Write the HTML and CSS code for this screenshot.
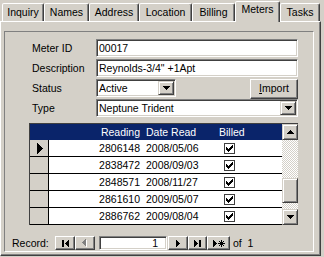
FILE: index.html
```html
<!DOCTYPE html>
<html>
<head>
<meta charset="utf-8">
<link rel="stylesheet" href="styles.css">
</head>
<body>
<div class="tabs">
  <div class="tab t-inq">Inquiry</div>
  <div class="tab t-nam">Names</div>
  <div class="tab t-adr">Address</div>
  <div class="tab t-loc">Location</div>
  <div class="tab t-bil">Billing</div>
  <div class="tab t-met sel">Meters</div>
  <div class="tab t-tsk">Tasks</div>
</div>
<div class="page">
  <div class="frame">
    <div class="form">
      <span class="lbl">Meter ID</span>
      <div class="tb">00017</div>
      <span class="lbl">Description</span>
      <div class="tb">Reynolds-3/4" +1Apt</div>
      <span class="lbl">Status</span>
      <div class="status-row">
        <div class="tb combo short"><span class="cv">Active</span><span class="drop"><svg width="7" height="4" shape-rendering="crispEdges"><path d="M0 0h7v1h-1v1h-1v1h-1v1h-1v-1h-1v-1h-1v-1h-1z"/></svg></span></div>
        <div class="btn import"><u>I</u>mport</div>
      </div>
      <span class="lbl">Type</span>
      <div class="tb combo"><span class="cv">Neptune Trident</span><span class="drop"><svg width="7" height="4" shape-rendering="crispEdges"><path d="M0 0h7v1h-1v1h-1v1h-1v1h-1v-1h-1v-1h-1v-1h-1z"/></svg></span></div>
    </div>

    <div class="sheet">
      <div class="grid">
        <div class="row hdr">
          <div class="sel-cell"></div>
          <div class="c-read">Reading</div>
          <div class="c-date">Date Read</div>
          <div class="c-bill">Billed</div>
        </div>
        <div class="row">
          <div class="sel-cell"><svg width="6" height="11" shape-rendering="crispEdges"><path d="M0 0h1v1h1v1h1v1h1v1h1v1h1v1h-1v1h-1v1h-1v1h-1v1h-1v1h-1z"/></svg></div>
          <div class="c-read">2806148</div>
          <div class="c-date">2008/05/06</div>
          <div class="c-bill"><svg class="chk" width="11" height="11" shape-rendering="crispEdges"><rect x="0.5" y="0.5" width="10" height="10" fill="#fff" stroke="#404040"/><path d="M2 4h1v3h-1zM3 5h1v3h-1zM4 6h1v3h-1zM5 5h1v3h-1zM6 4h1v3h-1zM7 3h1v3h-1zM8 2h1v3h-1z"/></svg></div>
        </div>
        <div class="row">
          <div class="sel-cell"></div>
          <div class="c-read">2838472</div>
          <div class="c-date">2008/09/03</div>
          <div class="c-bill"><svg class="chk" width="11" height="11" shape-rendering="crispEdges"><rect x="0.5" y="0.5" width="10" height="10" fill="#fff" stroke="#404040"/><path d="M2 4h1v3h-1zM3 5h1v3h-1zM4 6h1v3h-1zM5 5h1v3h-1zM6 4h1v3h-1zM7 3h1v3h-1zM8 2h1v3h-1z"/></svg></div>
        </div>
        <div class="row">
          <div class="sel-cell"></div>
          <div class="c-read">2848571</div>
          <div class="c-date">2008/11/27</div>
          <div class="c-bill"><svg class="chk" width="11" height="11" shape-rendering="crispEdges"><rect x="0.5" y="0.5" width="10" height="10" fill="#fff" stroke="#404040"/><path d="M2 4h1v3h-1zM3 5h1v3h-1zM4 6h1v3h-1zM5 5h1v3h-1zM6 4h1v3h-1zM7 3h1v3h-1zM8 2h1v3h-1z"/></svg></div>
        </div>
        <div class="row">
          <div class="sel-cell"></div>
          <div class="c-read">2861610</div>
          <div class="c-date">2009/05/07</div>
          <div class="c-bill"><svg class="chk" width="11" height="11" shape-rendering="crispEdges"><rect x="0.5" y="0.5" width="10" height="10" fill="#fff" stroke="#404040"/><path d="M2 4h1v3h-1zM3 5h1v3h-1zM4 6h1v3h-1zM5 5h1v3h-1zM6 4h1v3h-1zM7 3h1v3h-1zM8 2h1v3h-1z"/></svg></div>
        </div>
        <div class="row">
          <div class="sel-cell"></div>
          <div class="c-read">2886762</div>
          <div class="c-date">2009/08/04</div>
          <div class="c-bill"><svg class="chk" width="11" height="11" shape-rendering="crispEdges"><rect x="0.5" y="0.5" width="10" height="10" fill="#fff" stroke="#404040"/><path d="M2 4h1v3h-1zM3 5h1v3h-1zM4 6h1v3h-1zM5 5h1v3h-1zM6 4h1v3h-1zM7 3h1v3h-1zM8 2h1v3h-1z"/></svg></div>
        </div>
      </div>
      <div class="vscroll">
        <div class="sbtn"><svg width="7" height="4" shape-rendering="crispEdges"><path d="M3 0h1v1h1v1h1v1h1v1h-7v-1h1v-1h1v-1h1z"/></svg></div>
        <div class="track"><div class="thumb"></div></div>
        <div class="sbtn"><svg width="7" height="4" shape-rendering="crispEdges"><path d="M0 0h7v1h-1v1h-1v1h-1v1h-1v-1h-1v-1h-1v-1h-1z"/></svg></div>
      </div>
    </div>

    <div class="nav">
      <span class="rec">Record:</span>
      <div class="btn nb"><svg width="7" height="7" shape-rendering="crispEdges"><path d="M0 0h2v7h-2z"/><path d="M6 0h1v7h-1v-1h-1v-1h-1v-1h-1v-1h1v-1h1v-1h1z"/></svg></div>
      <div class="btn nb"><svg width="6" height="8" shape-rendering="crispEdges"><path fill="#fff" d="M4 1h1v7h-1v-1h-1v-1h-1v-1h-1v-1h1v-1h1v-1h1z"/><path fill="#808080" d="M3 0h1v7h-1v-1h-1v-1h-1v-1h-1v-1h1v-1h1v-1h1z"/></svg></div>
      <div class="tb navbox">1</div>
      <div class="btn nb"><svg width="4" height="7" shape-rendering="crispEdges"><path d="M0 0h1v1h1v1h1v1h1v1h-1v1h-1v1h-1v1h-1z"/></svg></div>
      <div class="btn nb nb-last"><svg width="7" height="7" shape-rendering="crispEdges"><path d="M0 0h1v1h1v1h1v1h1v1h-1v1h-1v1h-1v1h-1z"/><path d="M5 0h2v7h-2z"/></svg></div>
      <div class="btn nb nb-new"><svg width="12" height="7" shape-rendering="crispEdges"><path d="M0 0h1v1h1v1h1v1h1v1h-1v1h-1v1h-1v1h-1z"/><path d="M8 0h1v7h-1zM5 3h7v1h-7zM6 1h1v1h-1zM10 1h1v1h-1zM6 5h1v1h-1zM10 5h1v1h-1zM7 2h3v3h-3z"/></svg></div>
      <span class="of">of&nbsp; 1</span>
    </div>
  </div>
</div>
</body>
</html>
```

FILE: styles.css
```css
* {
  box-sizing: border-box;
  margin: 0;
  padding: 0;
}

body {
  margin: 0;
  width: 324px;
  height: 257px;
  overflow: hidden;
  background: #d4d0c8;
  font-family: "Liberation Sans", Arial, sans-serif;
  font-size: 10.5px;
  color: #000;
}

/* ---------- tabs ---------- */
.tabs {
  display: flex;
  align-items: flex-end;
  height: 21px;
  padding-left: 2px;
  position: relative;
  z-index: 1;
}

.tab {
  height: 18px;
  border: 1px solid;
  border-bottom: none;
  border-color: #fff #404040 transparent #fff;
  border-radius: 2px 2px 0 0;
  box-shadow: inset -1px 0 #808080;
  display: flex;
  align-items: center;
  justify-content: center;
  line-height: 1;
  padding-bottom: 1px;
  background: #d4d0c8;
}

.tab.sel {
  height: 21px;
  margin-bottom: -1px;
  padding-bottom: 5px;
}

.t-inq { width: 42px; }
.t-nam { width: 45px; }
.t-adr { width: 50px; }
.t-loc { width: 53px; }
.t-bil { width: 43px; }
.t-met { width: 45px; }
.t-tsk { width: 40px; }

/* ---------- page ---------- */
.page {
  width: 321px;
  height: 235px;
  border: 1px solid;
  border-color: #fff #404040 #404040 #fff;
  box-shadow: inset -1px -1px #808080;
  padding: 9px 0 0 3px;
}

.frame {
  width: 310px;
  height: 221px;
  border: 1px solid;
  border-color: #808080 #fff #fff #808080;
  display: flex;
  flex-direction: column;
}

/* ---------- form ---------- */
.form {
  display: grid;
  grid-template-columns: 64px 202px;
  grid-auto-rows: 18px;
  row-gap: 2px;
  margin: 7px 0 0 27px;
  align-items: center;
}

.lbl {
  line-height: 16px;
}

.tb {
  height: 18px;
  background: #fff;
  border: 1px solid;
  border-color: #808080 #fff #fff #808080;
  box-shadow: inset 1px 1px #404040, inset -1px -1px #d4d0c8;
  padding: 0 2px;
  line-height: 16px;
  white-space: nowrap;
  overflow: hidden;
}

.combo {
  display: flex;
  align-items: center;
  padding-right: 1px;
}

.combo .cv {
  flex: 1;
}

.combo.short {
  width: 80px;
}

.drop {
  width: 16px;
  height: 14px;
  display: flex;
  align-items: center;
  justify-content: center;
  background: #d4d0c8;
  border: 1px solid;
  border-color: #d4d0c8 #404040 #404040 #d4d0c8;
  box-shadow: inset 1px 1px #fff, inset -1px -1px #808080;
}

.drop svg {
  display: block;
}

.status-row {
  display: flex;
  justify-content: space-between;
  align-self: start;
  height: 18px;
}

.btn {
  background: #d4d0c8;
  border: 1px solid;
  border-color: #fff #404040 #404040 #fff;
  box-shadow: inset -1px -1px #808080;
  display: flex;
  align-items: center;
  justify-content: center;
}

.import {
  width: 48px;
  height: 20px;
  line-height: 1;
  padding-bottom: 1px;
}

/* ---------- datasheet ---------- */
.sheet {
  display: flex;
  width: 269px;
  height: 102px;
  margin: 6px 0 0 24px;
  border-top: 1px solid #404040;
  border-left: 1px solid #404040;
}

.grid {
  flex: 1;
  background: #fff;
  display: flex;
  flex-direction: column;
}

.row {
  display: grid;
  grid-template-columns: 19px 94px 72px 1fr;
  height: 17px;
  line-height: 16px;
  border-bottom: 1px solid #000;
}

.row.hdr {
  height: 16px;
  border-bottom: none;
  background: #0a246a;
  color: #fff;
}

.sel-cell {
  background: #d4d0c8;
  border-right: 1px solid #000;
  display: flex;
  align-items: center;
  justify-content: center;
  padding-left: 1px;
}

.hdr .sel-cell {
  background: #0a246a;
  border-right: none;
}

.sel-cell svg {
  display: block;
}

.c-read {
  text-align: right;
  padding-right: 3px;
}

.c-date {
  padding-left: 3px;
}

.c-bill {
  padding-left: 4px;
  display: flex;
  align-items: center;
}

.chk {
  display: block;
  margin-left: 5px;
}

.vscroll {
  width: 16px;
  display: flex;
  flex-direction: column;
}

.sbtn {
  height: 16px;
  display: flex;
  align-items: center;
  justify-content: center;
  background: #d4d0c8;
  border: 1px solid;
  border-color: #d4d0c8 #404040 #404040 #d4d0c8;
  box-shadow: inset 1px 1px #fff, inset -1px -1px #808080;
}

.sbtn svg {
  display: block;
}

.track {
  flex: 1;
  background: repeating-conic-gradient(#fff 0 25%, #d4d0c8 0 50%) 0 0 / 2px 2px;
}

.thumb {
  height: 25px;
  margin-top: 38px;
  background: #d4d0c8;
  border: 1px solid;
  border-color: #d4d0c8 #404040 #404040 #d4d0c8;
  box-shadow: inset 1px 1px #fff, inset -1px -1px #808080;
}

/* ---------- navigation ---------- */
.nav {
  display: flex;
  align-items: center;
  height: 14px;
  margin: 11px 0 0 7px;
}

.rec {
  width: 43px;
}

.nb {
  width: 20px;
  height: 14px;
}

.nb svg {
  display: block;
}

.nb-last {
  width: 19px;
}

.nb-new {
  width: 23px;
}

.navbox {
  width: 68px;
  height: 14px;
  line-height: 12px;
  margin: 0 1px 0 4px;
  text-align: right;
  padding-right: 8px;
}

.of {
  margin-left: 3px;
}
```
